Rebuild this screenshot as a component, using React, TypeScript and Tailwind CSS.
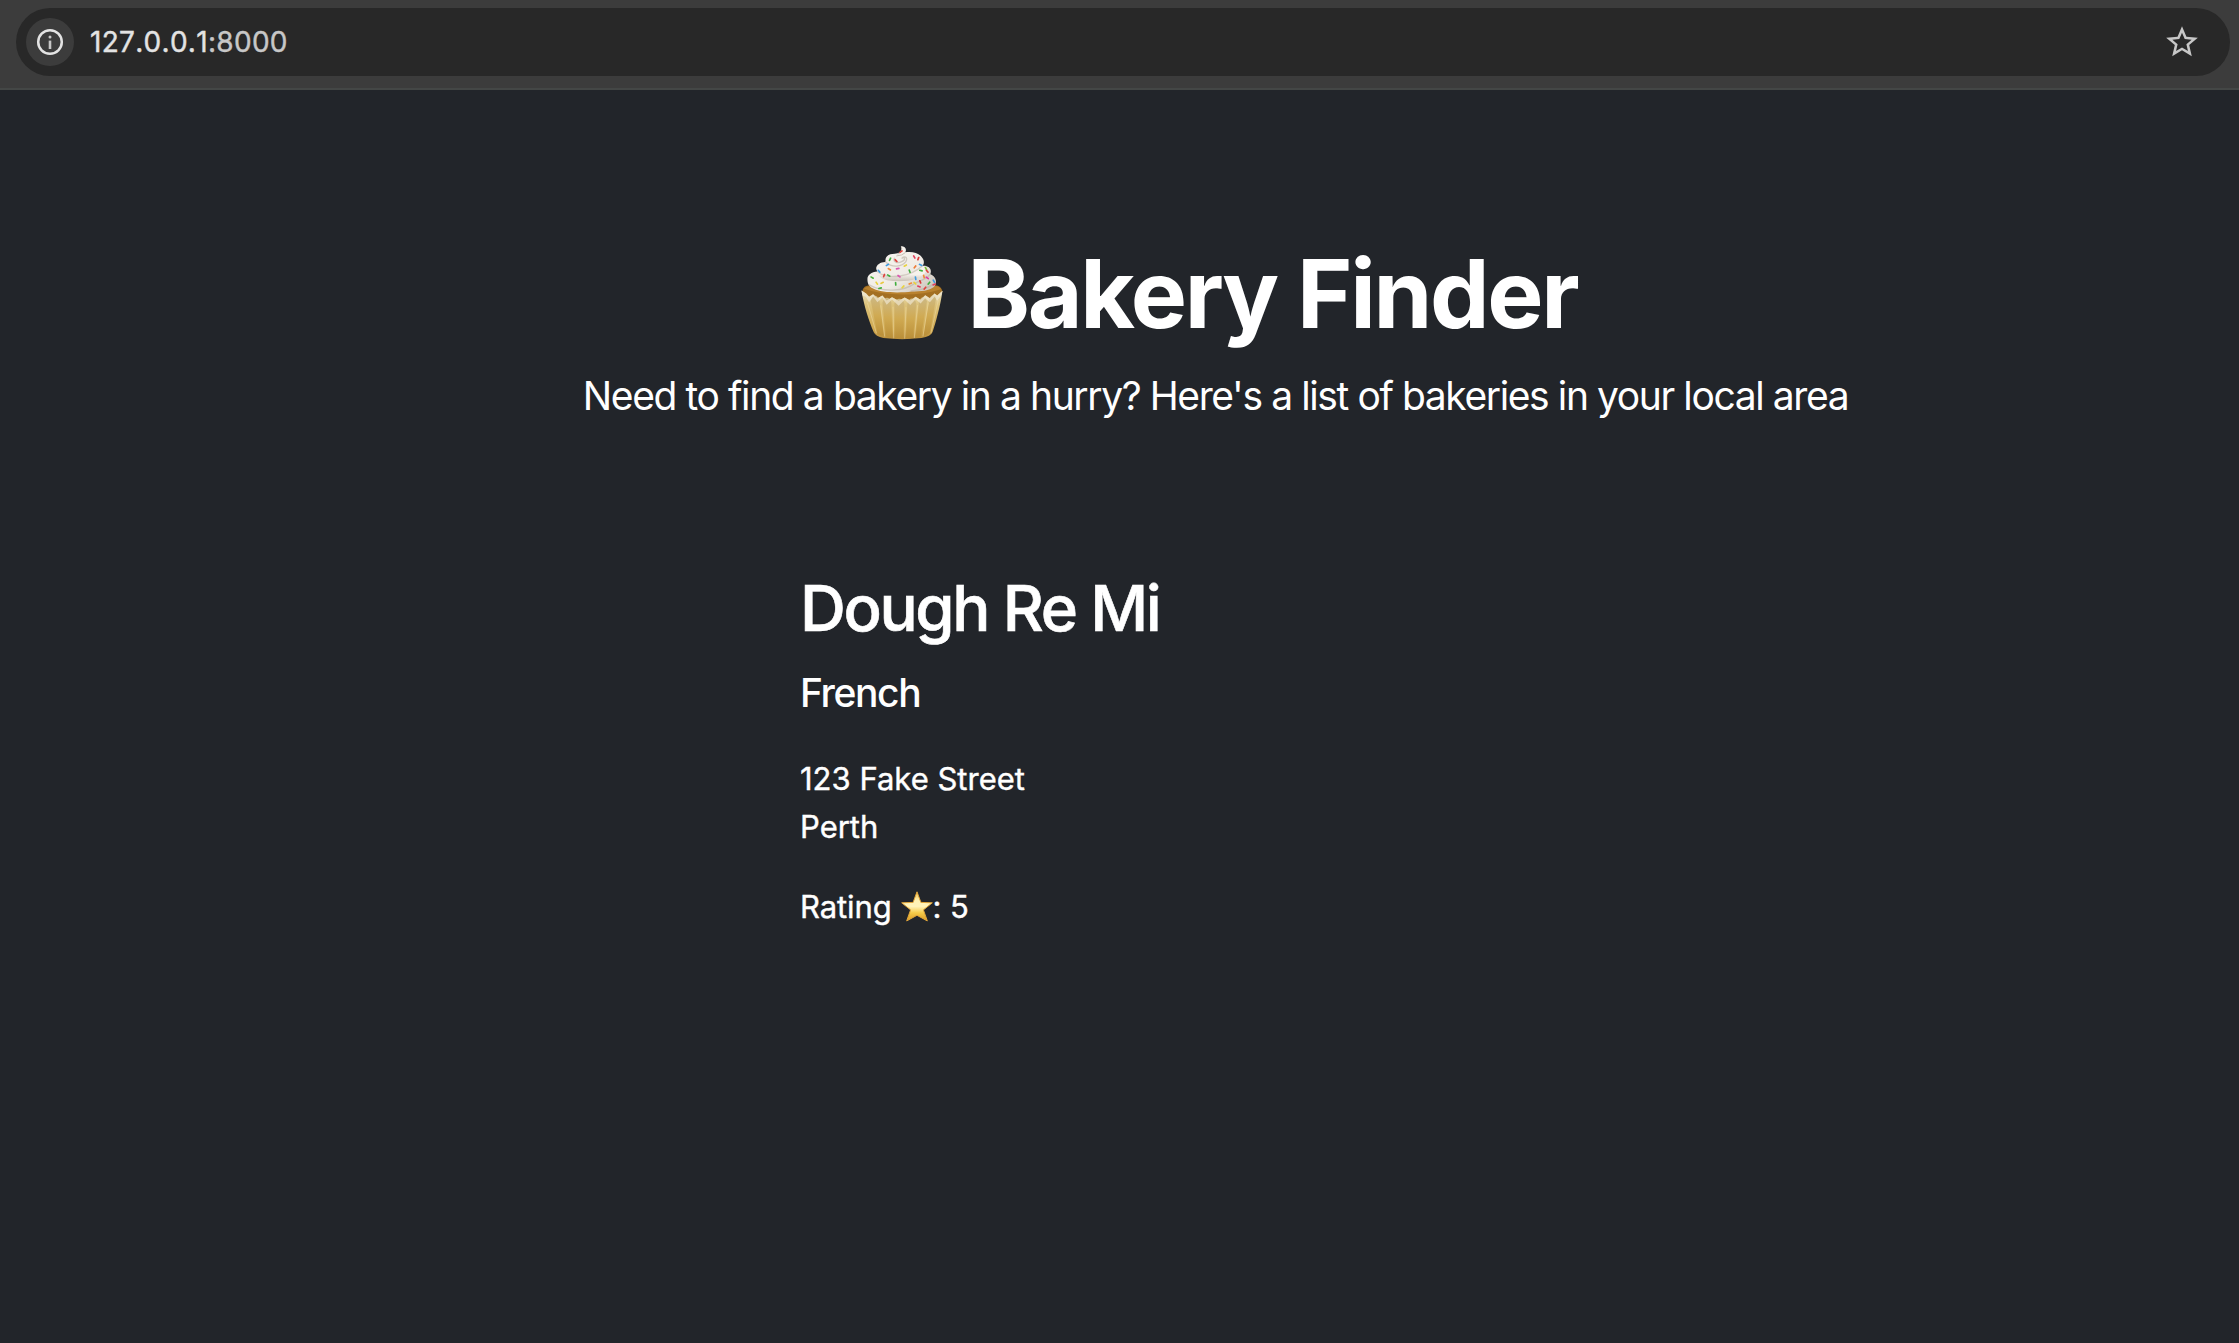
const SPRINKLES: [number, number, number, string][] = [
  [153, 48, -35, '#e0403c'], [120, 71, -65, '#3fae3c'], [138, 75, 45, '#e0403c'], [193, 64, 60, '#e23d5c'],
  [205, 69, -70, '#d93a3a'], [112, 88, -30, '#3c9be0'], [118, 101, 30, '#ef8b3a'], [143, 99, -10, '#d957b0'],
  [166, 90, -30, '#e8d33f'], [179, 107, 70, '#3fae3c'], [195, 94, -50, '#ee7d3a'], [212, 88, 25, '#3c9be0'],
  [213, 105, 15, '#3fae3c'], [228, 99, 60, '#7cbf3a'], [232, 107, 50, '#e0403c'], [87, 107, 50, '#3c9be0'],
  [102, 120, -70, '#e0403c'], [116, 120, 30, '#3fae3c'], [147, 122, 35, '#d957b0'], [66, 126, 30, '#4db53c'],
  [80, 143, 55, '#e8d33f'], [96, 142, -25, '#e8c83f'], [90, 158, -15, '#3fae3c'], [137, 145, 85, '#3fae3c'],
  [159, 154, -45, '#e8d33f'], [181, 144, -25, '#ef8b3a'], [197, 128, 80, '#3c9be0'], [222, 123, 75, '#ef8b3a'],
  [232, 127, 35, '#e23d9c'], [211, 139, 70, '#d93a3a'], [207, 153, 20, '#e23d5c'], [225, 158, -50, '#e0403c'],
  [237, 143, -50, '#3fae3c'], [252, 137, 60, '#3c9be0'], [253, 147, -20, '#e23d5c'], [195, 143, 40, '#e8d33f'],
];

const PLEATS = [
  'M62 196 C68 176 82 176 88 196 L101 300 Q92 304 82 296 Z',
  'M97 202 C103 182 119 182 124 202 L127 306 Q115 308 108 303 Z',
  'M133 205 C138 185 158 185 163 205 L160 309 Q147 311 136 308 Z',
  'M172 205 C178 184 193 184 199 204 L189 307 Q177 310 168 309 Z',
  'M207 200 C212 181 226 181 231 197 L213 304 Q204 307 197 306 Z',
  'M238 192 C243 177 254 176 259 186 L240 292 Q230 300 221 302 Z',
];

function Cupcake() {
  return (
    <svg viewBox="33 28 246 286" className="-mt-[4px] h-[95px] w-[82px] shrink-0" aria-label="Cupcake" role="img">
      <defs>
        <linearGradient id="cup" x1="0" y1="0" x2="0" y2="1">
          <stop offset="0" stopColor="#e9dfc0" />
          <stop offset="0.3" stopColor="#dcc27a" />
          <stop offset="0.8" stopColor="#cfa850" />
          <stop offset="1" stopColor="#b98e3c" />
        </linearGradient>
        <linearGradient id="pleat" x1="0" y1="0" x2="0" y2="1">
          <stop offset="0" stopColor="#cdb985" />
          <stop offset="0.5" stopColor="#d0aa52" />
          <stop offset="1" stopColor="#ba8f39" />
        </linearGradient>
        <linearGradient id="cream" x1="0" y1="0" x2="1" y2="1">
          <stop offset="0" stopColor="#fbf8f3" />
          <stop offset="0.6" stopColor="#efebe5" />
          <stop offset="1" stopColor="#c5bcb2" />
        </linearGradient>
        <linearGradient id="shade" x1="0" y1="0" x2="0" y2="1">
          <stop offset="0.55" stopColor="#f6f2ec" />
          <stop offset="1" stopColor="#c9c0b5" />
        </linearGradient>
      </defs>
      <path d="M36 168 Q40 148 62 149 L256 149 Q274 150 278 168 L262 196 L50 196 Z" fill="#a36f22" />
      <path d="M42 160 Q48 151 66 152 L250 151 Q268 152 273 161 Q220 178 156 177 Q90 177 42 160 Z" fill="#b9822f" />
      <path d="M34 165 L48 174 L57 184 L69 176 L82 188 L97 180 L110 195 L126 185 L146 196 L164 186 L181 195 L197 184 L212 193 L226 179 L240 188 L254 174 L262 180 L278 166 C272 210 257 264 248 290 Q243 303 215 308 Q156 315 100 308 Q76 303 71 291 C57 258 41 210 34 165 Z" fill="url(#cup)" />
      {PLEATS.map((d) => (
        <path key={d} d={d} fill="url(#pleat)" />
      ))}
      <path d="M34 165 L48 174 L57 184 L69 176 L82 188 L97 180 L110 195 L126 185 L146 196 L164 186 L181 195 L197 184 L212 193 L226 179 L240 188 L254 174 L262 180 L278 166 L275 178 L262 196 L254 184 L240 200 L226 188 L212 204 L197 191 L181 209 L164 193 L146 211 L126 192 L110 208 L97 186 L82 200 L69 183 L57 200 L47 184 L37 180 Z" fill="#f1ead5" opacity="0.65" />
      <path d="M52 202 L79 294 M92 210 L104 304 M129 214 L131 309 M168 215 L164 310 M203 209 L193 308 M235 202 L219 303 M265 194 L243 294" fill="none" stroke="#f0dfab" strokeWidth="2.5" opacity="0.6" />
      <path d="M52 132 C51 119 63 110 82 108 C70 93 89 78 107 79 C103 63 116 54 134 54 C150 53 160 45 153 31 C166 32 171 41 166 50 C190 47 209 53 218 68 C225 79 221 87 217 91 C236 89 248 101 241 116 C256 121 263 137 255 151 C244 164 222 169 185 168 C149 173 93 172 69 159 C56 153 52 144 52 132 Z" fill="url(#cream)" />
      <path d="M82 108 C108 133 180 122 217 91 C226 93 231 99 228 108 C217 134 157 143 111 134 C92 130 82 120 82 108 Z" fill="url(#shade)" />
      <path d="M107 79 C126 98 157 93 167 79 C177 63 160 60 155 69 C164 61 169 72 155 78 C143 84 128 79 133 68" fill="none" stroke="#cfc7bd" strokeWidth="4" strokeLinecap="round" />
      <path d="M83 109 C116 134 182 123 217 91 M57 148 C98 171 161 169 197 142 C214 136 232 130 241 116 M184 166 C203 165 235 159 256 142" fill="none" stroke="#b8aea3" strokeWidth="4" opacity="0.55" strokeLinecap="round" />
      <path d="M154 33 Q159 47 143 56 M166 51 Q157 60 139 61" fill="none" stroke="#c6bdb2" strokeWidth="3" />
      {SPRINKLES.map(([x, y, r, c]) => (
        <rect key={`${x}-${y}`} x={x - 6} y={y - 2.5} width="12" height="5" rx="2" fill={c} transform={`rotate(${r} ${x} ${y})`} />
      ))}
    </svg>
  );
}

function GoldStar() {
  return (
    <svg viewBox="0 0 32 31" className="-mt-[2px] h-[31px] w-[32px] shrink-0" role="img" aria-label="Star">
      <defs>
        <linearGradient id="gold" x1="0" y1="0" x2="0" y2="1">
          <stop offset="0" stopColor="#f3c14b" />
          <stop offset="0.3" stopColor="#fff3b4" />
          <stop offset="0.5" stopColor="#fff4bb" />
          <stop offset="0.72" stopColor="#f5cb4a" />
          <stop offset="1" stopColor="#d99a22" />
        </linearGradient>
      </defs>
      <path d="M16 .8 L19.9 11.4 L31.3 11.8 L22.4 18.9 L26.3 29.9 L16 24.3 L5.7 29.9 L9.6 18.9 L.7 11.8 L12.1 11.4 Z" fill="url(#gold)" stroke="#e2a63a" strokeWidth="1" strokeLinejoin="round" />
    </svg>
  );
}

function AddressBar() {
  return (
    <div className="flex h-[90px] items-start border-b-2 border-[#444746] bg-[#3c3c3c] pt-2 pr-[9px] pl-4">
      <div className="flex h-[68px] flex-1 items-center rounded-full bg-[#282828] pr-[29px] pl-[10px]">
        <div className="flex size-12 items-center justify-center rounded-full bg-[#3c3c3c]">
          <svg viewBox="0 0 28 28" className="size-7" fill="none">
            <circle cx="14" cy="14" r="11.8" stroke="#e3e3e3" strokeWidth="2.5" />
            <circle cx="14" cy="9" r="1.5" fill="#c7c7c7" />
            <path d="M14 12.6V21" stroke="#c7c7c7" strokeWidth="2.6" />
          </svg>
        </div>
        <div className="ml-4 flex-1 text-[28px] leading-10 tracking-[0.3px] text-[#e3e3e3] [-webkit-text-stroke:0.4px] [font-kerning:none]">
          127.0.0.1<span className="text-[#c7c7c7]">:8000</span>
        </div>
        <svg viewBox="0 0 24 24" className="size-[38px]" fill="#c7c7c7">
          <path d="M22 9.24l-7.19-.62L12 2 9.19 8.63 2 9.24l5.46 4.73L5.82 21 12 17.27 18.18 21l-1.63-7.03L22 9.24zM12 15.4l-3.76 2.27 1-4.28-3.32-2.88 4.38-.38L12 6.1l1.71 4.04 4.38.38-3.32 2.88 1 4.28L12 15.4z" />
        </svg>
      </div>
    </div>
  );
}

export default function App() {
  return (
    <div className="min-h-screen bg-[#22252a] font-['Inter',sans-serif] text-white">
      <AddressBar />
      <header className="flex flex-col items-center pt-[146px] pl-[192px]">
        <h1 className="ml-[7px] flex h-[116px] items-center gap-[25px] text-[94.5px] leading-[116px] font-bold tracking-[-2.3px] whitespace-nowrap">
          <Cupcake />
          <span>Bakery Finder</span>
        </h1>
        <p className="mt-[14px] text-[39px] leading-[60px] tracking-[-1.4px] whitespace-nowrap">
          Need to find a bakery in a hurry? Here's a list of bakeries in your local area
        </p>
      </header>
      <main className="mt-[143px] pl-[800px]">
        <h2 className="text-[63.5px] leading-[77px] font-medium tracking-[-2.35px] [-webkit-text-stroke:0.6px]">Dough Re Mi</h2>
        <h3 className="mt-[23px] text-[39px] leading-[48px] font-medium tracking-[-1.4px]">French</h3>
        <p className="mt-[38px] text-[31px] leading-[48px] [-webkit-text-stroke:0.4px]">
          123 Fake Street
          <br />
          Perth
        </p>
        <p className="mt-8 flex items-center text-[31px] leading-[48px] tracking-[-0.1px] [-webkit-text-stroke:0.4px]">
          <span>Rating</span>
          <span className="ml-[9px] flex">
            <GoldStar />
          </span>
          <span>: 5</span>
        </p>
      </main>
    </div>
  );
}
